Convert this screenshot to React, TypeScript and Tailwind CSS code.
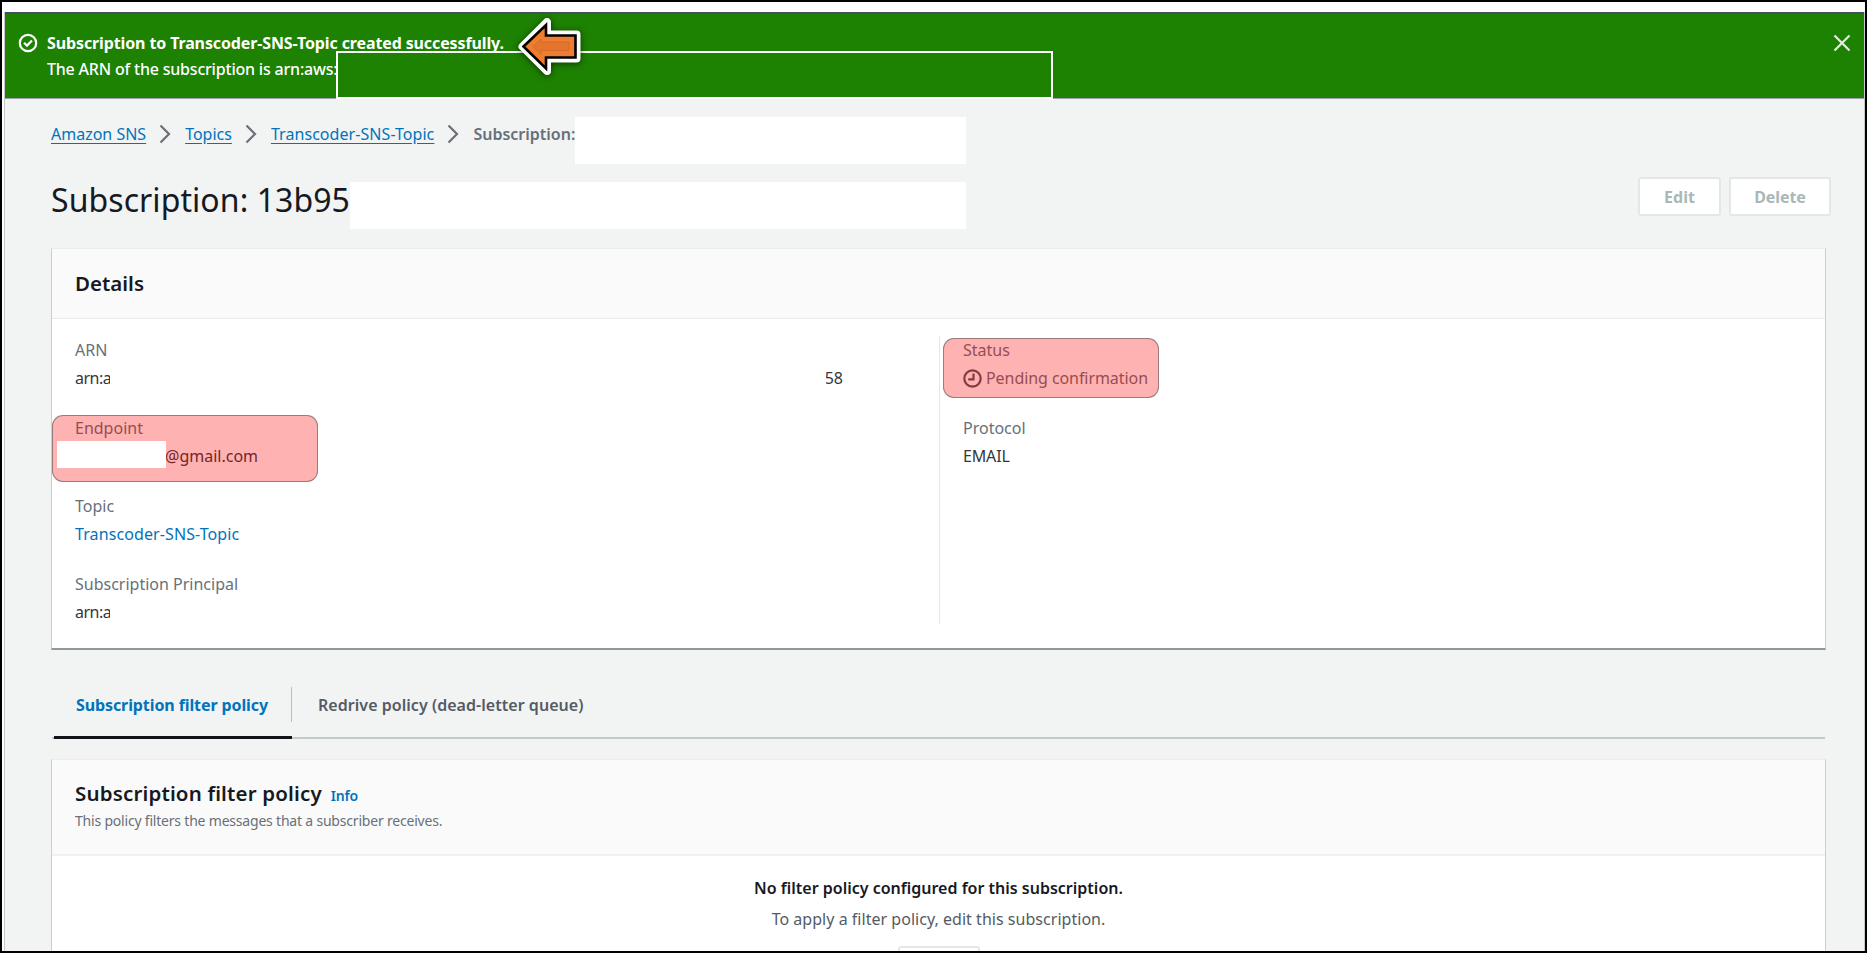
import type { ReactNode } from "react";

function Chevron() {
  return (
    <svg className="mr-3.5 ml-[13px] h-5 w-3 shrink-0" viewBox="0 0 12 20" fill="none" stroke="#687078" strokeWidth="2.2">
      <path d="M1.5 1.5 L10 10 L1.5 18.5" />
    </svg>
  );
}

function Field({ label, children, className = "" }: { label: string; children?: ReactNode; className?: string }) {
  return (
    <div className={`relative h-[78px] leading-7 whitespace-nowrap ${className}`}>
      <div className="h-7 text-[#687078]">{label}</div>
      <div className="flex h-7 items-center text-[#33373c]">{children}</div>
    </div>
  );
}

function Clipped({ children }: { children: ReactNode }) {
  return <span className="w-[35px] overflow-hidden tracking-[-0.5px]">{children}</span>;
}

function Highlight({ className }: { className: string }) {
  return <div className={`absolute rounded-[11px] border-[1.5px] border-[#8a7070]/85 bg-[#ff0000]/30 ${className}`} />;
}

function GhostButton({ children, className }: { children?: ReactNode; className: string }) {
  return (
    <button className={`flex h-[39px] items-center justify-center rounded-[3px] border-2 border-[#e3e7e7] bg-white font-bold text-[#aab7b8] ${className}`}>
      {children}
    </button>
  );
}

function Banner() {
  return (
    <div className="relative h-[87px] shrink-0 border-t-2 border-b border-t-[#454e61] border-b-[#9aa0ac] bg-[#1d8102] text-white">
      <div className="flex pt-4 pl-[13px]">
        <svg className="mt-[3px] h-5 w-5 shrink-0" viewBox="0 0 20 20" fill="none" stroke="white" strokeWidth="2.2">
          <circle cx="10" cy="10" r="8.2" />
          <path d="M6 9.8 L9 12.6 L14 7.4" />
        </svg>
        <div className="ml-[9px] whitespace-nowrap">
          <div className="h-[26px] leading-[26px] font-bold tracking-[-0.12px]">Subscription to Transcoder-SNS-Topic created successfully.</div>
          <div className="h-[26px] leading-[26px] font-medium tracking-[-0.2px]">The ARN of the subscription is arn:aws:</div>
        </div>
        <svg className="mt-1 mr-[13px] ml-auto h-[18px] w-[18px]" viewBox="0 0 18 18" stroke="#e6ece4" strokeWidth="2.2">
          <path d="M1.5 1.5 L16.5 16.5 M16.5 1.5 L1.5 16.5" />
        </svg>
      </div>
      <div className="absolute top-[37px] left-[331px] h-[48px] w-[717px] border-2 border-white bg-[#1d8102]" />
      <svg className="absolute top-0 left-[505px] h-[68px] w-[80px] drop-shadow-[0_1px_3px_rgba(0,0,0,0.6)]" viewBox="510 14 80 68">
        <path d="M522.5 46.5 L547 22 V34.5 H576.5 V58.5 H547 V71 Z" fill="#fff" stroke="#fff" strokeWidth="8" strokeLinejoin="round" />
        <path d="M523.5 46.5 L546 25 V35.5 H575.5 V57.5 H546 V68.5 Z" fill="#ed7d31" stroke="#000" strokeWidth="2.6" />
        <path d="M533 46.5 L541 39 V42 H569 V50.5 H541 V54 Z" fill="#e5752d" stroke="#cf6a2a" strokeWidth="0.8" />
      </svg>
    </div>
  );
}

function Breadcrumbs() {
  return (
    <div className="mt-[18px] flex h-[47px] items-center whitespace-nowrap">
      <div className="flex items-center pb-[13px] text-[#0073bb]">
        <a className="underline underline-offset-[3px]">Amazon SNS</a>
        <Chevron />
        <a className="underline underline-offset-[3px]">Topics</a>
        <Chevron />
        <a className="tracking-[0.06px] underline underline-offset-[3px]">Transcoder-SNS-Topic</a>
        <Chevron />
      </div>
      <span className="w-[102px] pb-[13px] font-semibold text-[#687078]">Subscription:</span>
      <span className="h-full w-[391px] bg-white" />
    </div>
  );
}

export default function App() {
  return (
    <div className="flex h-[953px] w-[1867px] flex-col overflow-hidden border-2 border-black bg-white pt-[10px] font-['Noto_Sans','Open_Sans',sans-serif] text-base text-[#16191f]">
      <div className="ml-0.5 flex min-h-0 flex-1 flex-col border-r border-l border-[#c5c9c9] bg-[#f2f3f3]">
        <Banner />
        <div className="flex min-h-0 flex-1 flex-col pr-[38px] pl-[46px]">
          <Breadcrumbs />
          <div className="mt-[18px] flex h-[47px]">
            <div className="flex flex-1 items-center whitespace-nowrap">
              <h1 className="w-[299px] pb-3 text-[32px] leading-[47px] tracking-[0.07px]">Subscription: 13b95</h1>
              <span className="h-full w-[616px] bg-white" />
            </div>
            <div className="-mt-[5px] -mr-[5px] flex gap-2">
              <GhostButton className="w-[83px]">Edit</GhostButton>
              <GhostButton className="w-[102px] tracking-[-0.1px]">Delete</GhostButton>
            </div>
          </div>

          <section className="mt-[19px] h-[402px] shrink-0 border border-t-[#eaeded] border-r-[#c9cfcf] border-b-2 border-l-[#c9cfcf] border-b-[#8f999c] bg-white">
            <div className="flex h-[70px] items-center border-b border-[#e6eaea] bg-[#fafafa] pl-[23px]">
              <h2 className="text-[20.5px] font-semibold">Details</h2>
            </div>
            <div className="flex pt-[17px]">
              <div className="relative h-[288px] w-[888px] border-r border-[#e3e8e8] pl-[23px]">
                <Field label="ARN">
                  <Clipped>arn:a</Clipped>
                  <span className="ml-[716px] flex w-[17px] justify-end overflow-hidden">58</span>
                </Field>
                <Field label="Endpoint">
                  <span className="pl-[90px]">@gmail.com</span>
                </Field>
                <Field label="Topic">
                  <a className="tracking-[0.1px] text-[#0073bb]">Transcoder-SNS-Topic</a>
                </Field>
                <Field label="Subscription Principal">
                  <Clipped>arn:a</Clipped>
                </Field>
                <Highlight className="top-[79px] left-0 h-[67px] w-[266px]" />
                <div className="absolute top-[105px] left-[5px] h-[27px] w-[109px] bg-white" />
              </div>
              <div className="relative flex-1 pl-[23px]">
                <Field label="Status">
                  <svg className="mr-[4px] h-[19px] w-[19px]" viewBox="0 0 19 19" fill="none" stroke="#50555c" strokeWidth="2.2">
                    <circle cx="9.5" cy="9.5" r="8.2" />
                    <path d="M10.5 4.5 V10.3 H5.2" />
                  </svg>
                  <span className="tracking-[-0.07px] text-[#687078]">Pending confirmation</span>
                </Field>
                <Field label="Protocol">
                  <span className="tracking-[-0.15px]">EMAIL</span>
                </Field>
                <Highlight className="top-[2px] left-[3px] h-[60px] w-[216px]" />
              </div>
            </div>
          </section>

          <div className="mr-px ml-px flex h-[89px] shrink-0 items-start border-b-2 border-[#c0caca] pt-[37px] font-semibold whitespace-nowrap">
            <div className="ml-0.5 flex h-[52px] w-[238px] flex-col border-b-[3px] border-[#101318]">
              <div className="flex h-[35px] items-center border-r-[1.5px] border-[#b5c0c0] pl-[22px] font-bold tracking-[-0.1px] text-[#0073bb]">Subscription filter policy</div>
            </div>
            <div className="flex h-[35px] items-center pl-[26px] tracking-[0.04px] text-[#545b64]">Redrive policy (dead-letter queue)</div>
          </div>

          <section className="mt-5 min-h-0 flex-1 border border-b-0 border-t-[#eaeded] border-r-[#c9cfcf] border-l-[#c9cfcf] bg-white">
            <div className="h-[96px] border-b-2 border-[#eff1f1] bg-[#fafafa] pt-[18px] pl-[23px]">
              <div className="flex h-[30px] items-baseline leading-[30px]">
                <h2 className="text-[20.5px] font-semibold tracking-[0.16px]">Subscription filter policy</h2>
                <a className="ml-[9px] text-[14px] font-semibold tracking-[-0.2px] text-[#0073bb]">Info</a>
              </div>
              <p className="mt-[3px] text-[14px] leading-5 tracking-[-0.2px] text-[#687078]">This policy filters the messages that a subscriber receives.</p>
            </div>
            <div className="flex flex-col items-center pt-[18px] leading-7">
              <p className="font-semibold">No filter policy configured for this subscription.</p>
              <p className="mt-[3px] tracking-[0.03px] text-[#545b64]">To apply a filter policy, edit this subscription.</p>
              <GhostButton className="mt-[13px] w-[82px]" />
            </div>
          </section>
        </div>
      </div>
    </div>
  );
}
